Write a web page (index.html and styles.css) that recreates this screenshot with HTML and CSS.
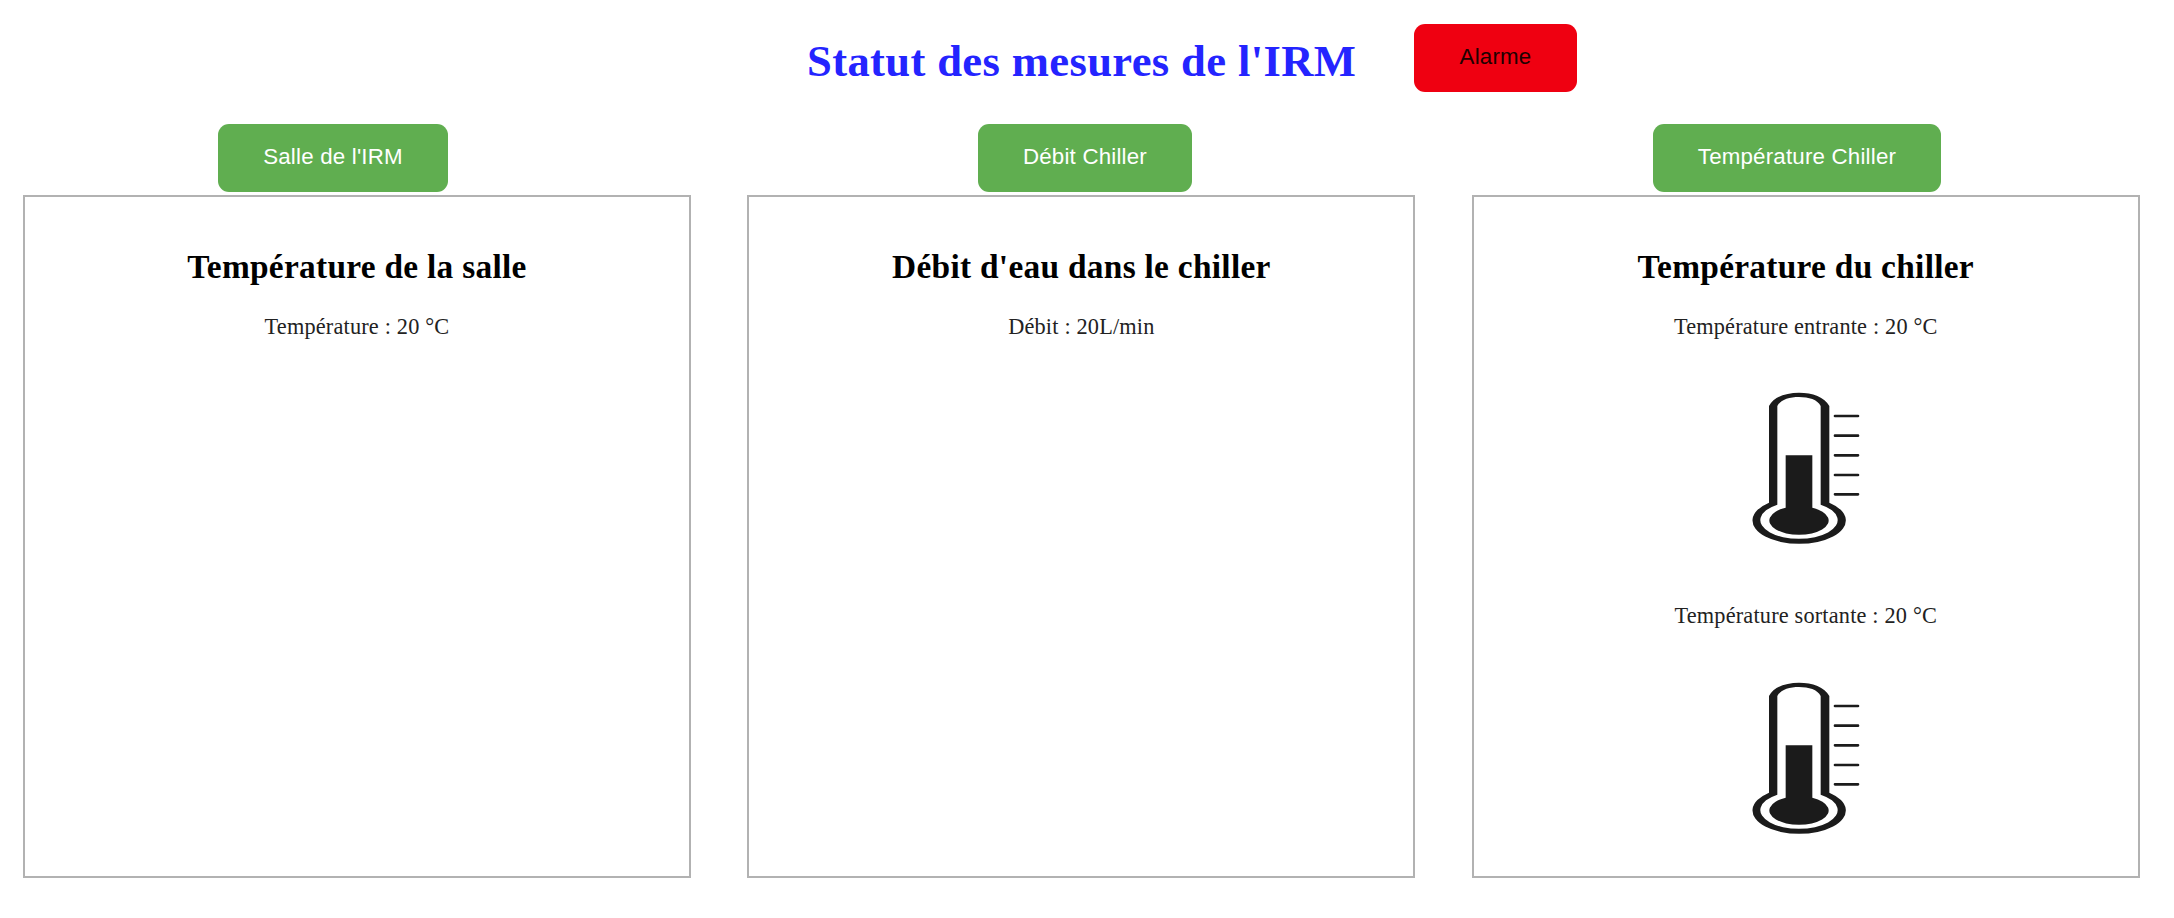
FILE: index.html
```html
<!DOCTYPE html>
<html lang="fr">
<head>
<meta charset="utf-8">
<title>Statut des mesures de l'IRM</title>
<link rel="stylesheet" href="styles.css">
</head>
<body>
<svg class="defs" width="0" height="0" aria-hidden="true">
  <symbol id="thermometer" viewBox="0 0 510 570">
    <path fill-rule="evenodd" d="M147 398V108C161 81 197 68 237 68S314 81 328 108V398A140 70 0 1 1 147 398ZM172 404V108C182 89 208 81 237 81S293 89 302 108V404A116 56 0 1 1 172 404Z"/>
    <path d="M197 256H277V413A89 43 0 1 1 197 413Z"/>
    <path class="ticks" d="M345 138H414M345 197H414M345 256H414M345 315H414M345 373H414"/>
  </symbol>
</svg>
<header class="header">
  <h1 class="title">Statut des mesures de l'IRM</h1>
  <button class="button alarm">Alarme</button>
</header>
<main class="columns">
  <section class="column">
    <button class="button room">Salle de l'IRM</button>
    <div class="panel">
      <h2 class="heading">Température de la salle</h2>
      <p class="measure">Température : 20 °C</p>
    </div>
  </section>
  <section class="column">
    <button class="button flow">Débit Chiller</button>
    <div class="panel">
      <h2 class="heading">Débit d'eau dans le chiller</h2>
      <p class="measure">Débit : 20L/min</p>
    </div>
  </section>
  <section class="column">
    <button class="button chiller">Température Chiller</button>
    <div class="panel">
      <h2 class="heading">Température du chiller</h2>
      <p class="measure">Température entrante : 20 °C</p>
      <svg class="thermometer"><use href="#thermometer"/></svg>
      <p class="measure outgoing">Température sortante : 20 °C</p>
      <svg class="thermometer"><use href="#thermometer"/></svg>
    </div>
  </section>
</main>
</body>
</html>
```
FILE: styles.css
```css
* { box-sizing: border-box; }
body {
  margin: 0;
  background: #fff;
  font-family: "Liberation Serif", "Times New Roman", serif;
  overflow: hidden;
}
.defs { display: block; }
.header {
  display: flex;
  align-items: flex-start;
  height: 124px;
  padding: 24px 0 0 807px;
}
.title {
  margin: 12px 0 0;
  width: 607px;
  font-size: 44.6px;
  line-height: 50px;
  letter-spacing: 0.37px;
  color: #2424ff;
  white-space: nowrap;
}
.button {
  display: block;
  height: 68px;
  padding: 0 0 2px;
  border: 0;
  border-radius: 11px;
  background: #60ae50;
  color: #fff;
  font: 22.3px/26px "Liberation Sans", Arial, sans-serif;
  letter-spacing: 0.2px;
  text-align: center;
  white-space: nowrap;
}
.alarm { width: 163px; background: #ef0011; color: #200000; }
.columns {
  display: grid;
  grid-template-columns: repeat(3, 668px);
  column-gap: 56.4px;
  padding-left: 23px;
}
.room { width: 230px; margin-left: 195px; }
.flow { width: 214px; margin-left: 230.6px; }
.chiller { width: 288px; margin-left: 181.2px; }
.panel {
  display: flex;
  flex-direction: column;
  align-items: center;
  height: 683px;
  margin-top: 3px;
  padding-top: 51px;
  border: 2px solid #b2b2b2;
}
.heading {
  margin: 0;
  font-size: 33.4px;
  line-height: 38px;
  letter-spacing: 0.28px;
  color: #000;
}
.measure {
  margin: 28px 0 0;
  font-size: 22.3px;
  line-height: 26px;
  letter-spacing: 0.18px;
  color: #222;
}
.thermometer {
  display: block;
  width: 170px;
  height: 190px;
  margin: 30px 2px 0 0;
  fill: #1b1b1b;
}
.outgoing { margin-top: 43px; }
.outgoing + .thermometer { margin-top: 31px; }
.ticks { fill: none; stroke: #1b1b1b; stroke-width: 8; stroke-linecap: round; }
```
